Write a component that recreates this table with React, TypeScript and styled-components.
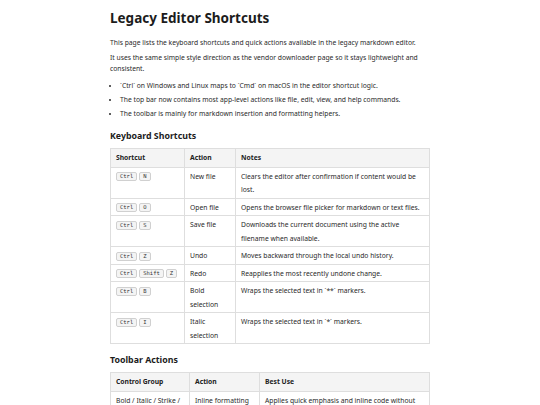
import React from "react";
import styled, { createGlobalStyle } from "styled-components";

const Global = createGlobalStyle`
  html, body { margin: 0; padding: 0; background: #ffffff; }
  body { font-family: "Noto Sans", "Open Sans", sans-serif; color: #2a2a2a; }
`;

const Page = styled.main`
  max-width: 320px;
  margin: 0 auto;
  padding: 8px 0 0;
`;

const Title = styled.h1`
  font-size: 13.5px;
  line-height: 20px;
  font-weight: 700;
  margin: 0 0 8.5px;
  color: #1c1c1c;
`;

const Para = styled.p`
  font-size: 6.75px;
  line-height: 11px;
  margin: 0 0 4px;
`;

const List = styled.ul`
  margin: 6px 0 11.5px;
  padding: 0 0 0 10px;
  font-size: 6.75px;
  line-height: 11px;
`;

const Item = styled.li`
  margin: 0 0 3px;
  &:last-child { margin-bottom: 0; }
`;

const Heading = styled.h2`
  font-size: 8.8px;
  line-height: 12px;
  font-weight: 700;
  margin: 0 0 6px;
  color: #1c1c1c;
`;

const Table = styled.table`
  width: 100%;
  table-layout: fixed;
  border-collapse: collapse;
  font-size: 6.75px;
  line-height: 13.5px;
  margin: 0 0 10px;
`;

const Col = styled.col<{ $w?: string }>`
  width: ${(p) => p.$w || "auto"};
`;

const Th = styled.th`
  text-align: left;
  font-weight: 700;
  background: #f4f4f4;
  border: 1px solid #dedede;
  padding: 2px 5px;
  color: #222;
`;

const Td = styled.td`
  vertical-align: top;
  border: 1px solid #dedede;
  padding: 2px 5px 1px;
`;

const Keys = styled.span`
  display: inline-flex;
  gap: 2px;
  vertical-align: middle;
`;

const Kbd = styled.kbd`
  font-family: "DejaVu Sans Mono", "Liberation Mono", monospace;
  font-size: 5.5px;
  line-height: 7px;
  padding: 0 3px;
  border: 1px solid #d0d0d0;
  border-radius: 2px;
  background: #f4f4f4;
  color: #333;
`;

const shortcuts: [string[], string, string][] = [
  [["Ctrl", "N"], "New file", "Clears the editor after confirmation if content would be lost."],
  [["Ctrl", "O"], "Open file", "Opens the browser file picker for markdown or text files."],
  [["Ctrl", "S"], "Save file", "Downloads the current document using the active filename when available."],
  [["Ctrl", "Z"], "Undo", "Moves backward through the local undo history."],
  [["Ctrl", "Shift", "Z"], "Redo", "Reapplies the most recently undone change."],
  [["Ctrl", "B"], "Bold selection", "Wraps the selected text in `**` markers."],
  [["Ctrl", "I"], "Italic selection", "Wraps the selected text in `*` markers."],
];

const toolbar: [string, string, string][] = [
  ["Bold / Italic / Strike / Code", "Inline formatting", "Applies quick emphasis and inline code without leaving the keyboard."],
];

export default function App() {
  return (
    <>
      <Global />
      <Page>
        <Title>Legacy Editor Shortcuts</Title>
        <Para>This page lists the keyboard shortcuts and quick actions available in the legacy markdown editor.</Para>
        <Para>It uses the same simple style direction as the vendor downloader page so it stays lightweight and consistent.</Para>
        <List>
          <Item>`Ctrl` on Windows and Linux maps to `Cmd` on macOS in the editor shortcut logic.</Item>
          <Item>The top bar now contains most app-level actions like file, edit, view, and help commands.</Item>
          <Item>The toolbar is mainly for markdown insertion and formatting helpers.</Item>
        </List>
        <Heading>Keyboard Shortcuts</Heading>
        <Table>
          <colgroup>
            <Col $w="74px" />
            <Col $w="51px" />
            <Col />
          </colgroup>
          <thead>
            <tr>
              <Th>Shortcut</Th>
              <Th>Action</Th>
              <Th>Notes</Th>
            </tr>
          </thead>
          <tbody>
            {shortcuts.map(([keys, action, note]) => (
              <tr key={action}>
                <Td>
                  <Keys>
                    {keys.map((k) => (
                      <Kbd key={k}>{k}</Kbd>
                    ))}
                  </Keys>
                </Td>
                <Td>{action}</Td>
                <Td>{note}</Td>
              </tr>
            ))}
          </tbody>
        </Table>
        <Heading>Toolbar Actions</Heading>
        <Table>
          <colgroup>
            <Col $w="79px" />
            <Col $w="70px" />
            <Col />
          </colgroup>
          <thead>
            <tr>
              <Th>Control Group</Th>
              <Th>Action</Th>
              <Th>Best Use</Th>
            </tr>
          </thead>
          <tbody>
            {toolbar.map(([g, a, b]) => (
              <tr key={g}>
                <Td>{g}</Td>
                <Td>{a}</Td>
                <Td>{b}</Td>
              </tr>
            ))}
          </tbody>
        </Table>
      </Page>
    </>
  );
}
